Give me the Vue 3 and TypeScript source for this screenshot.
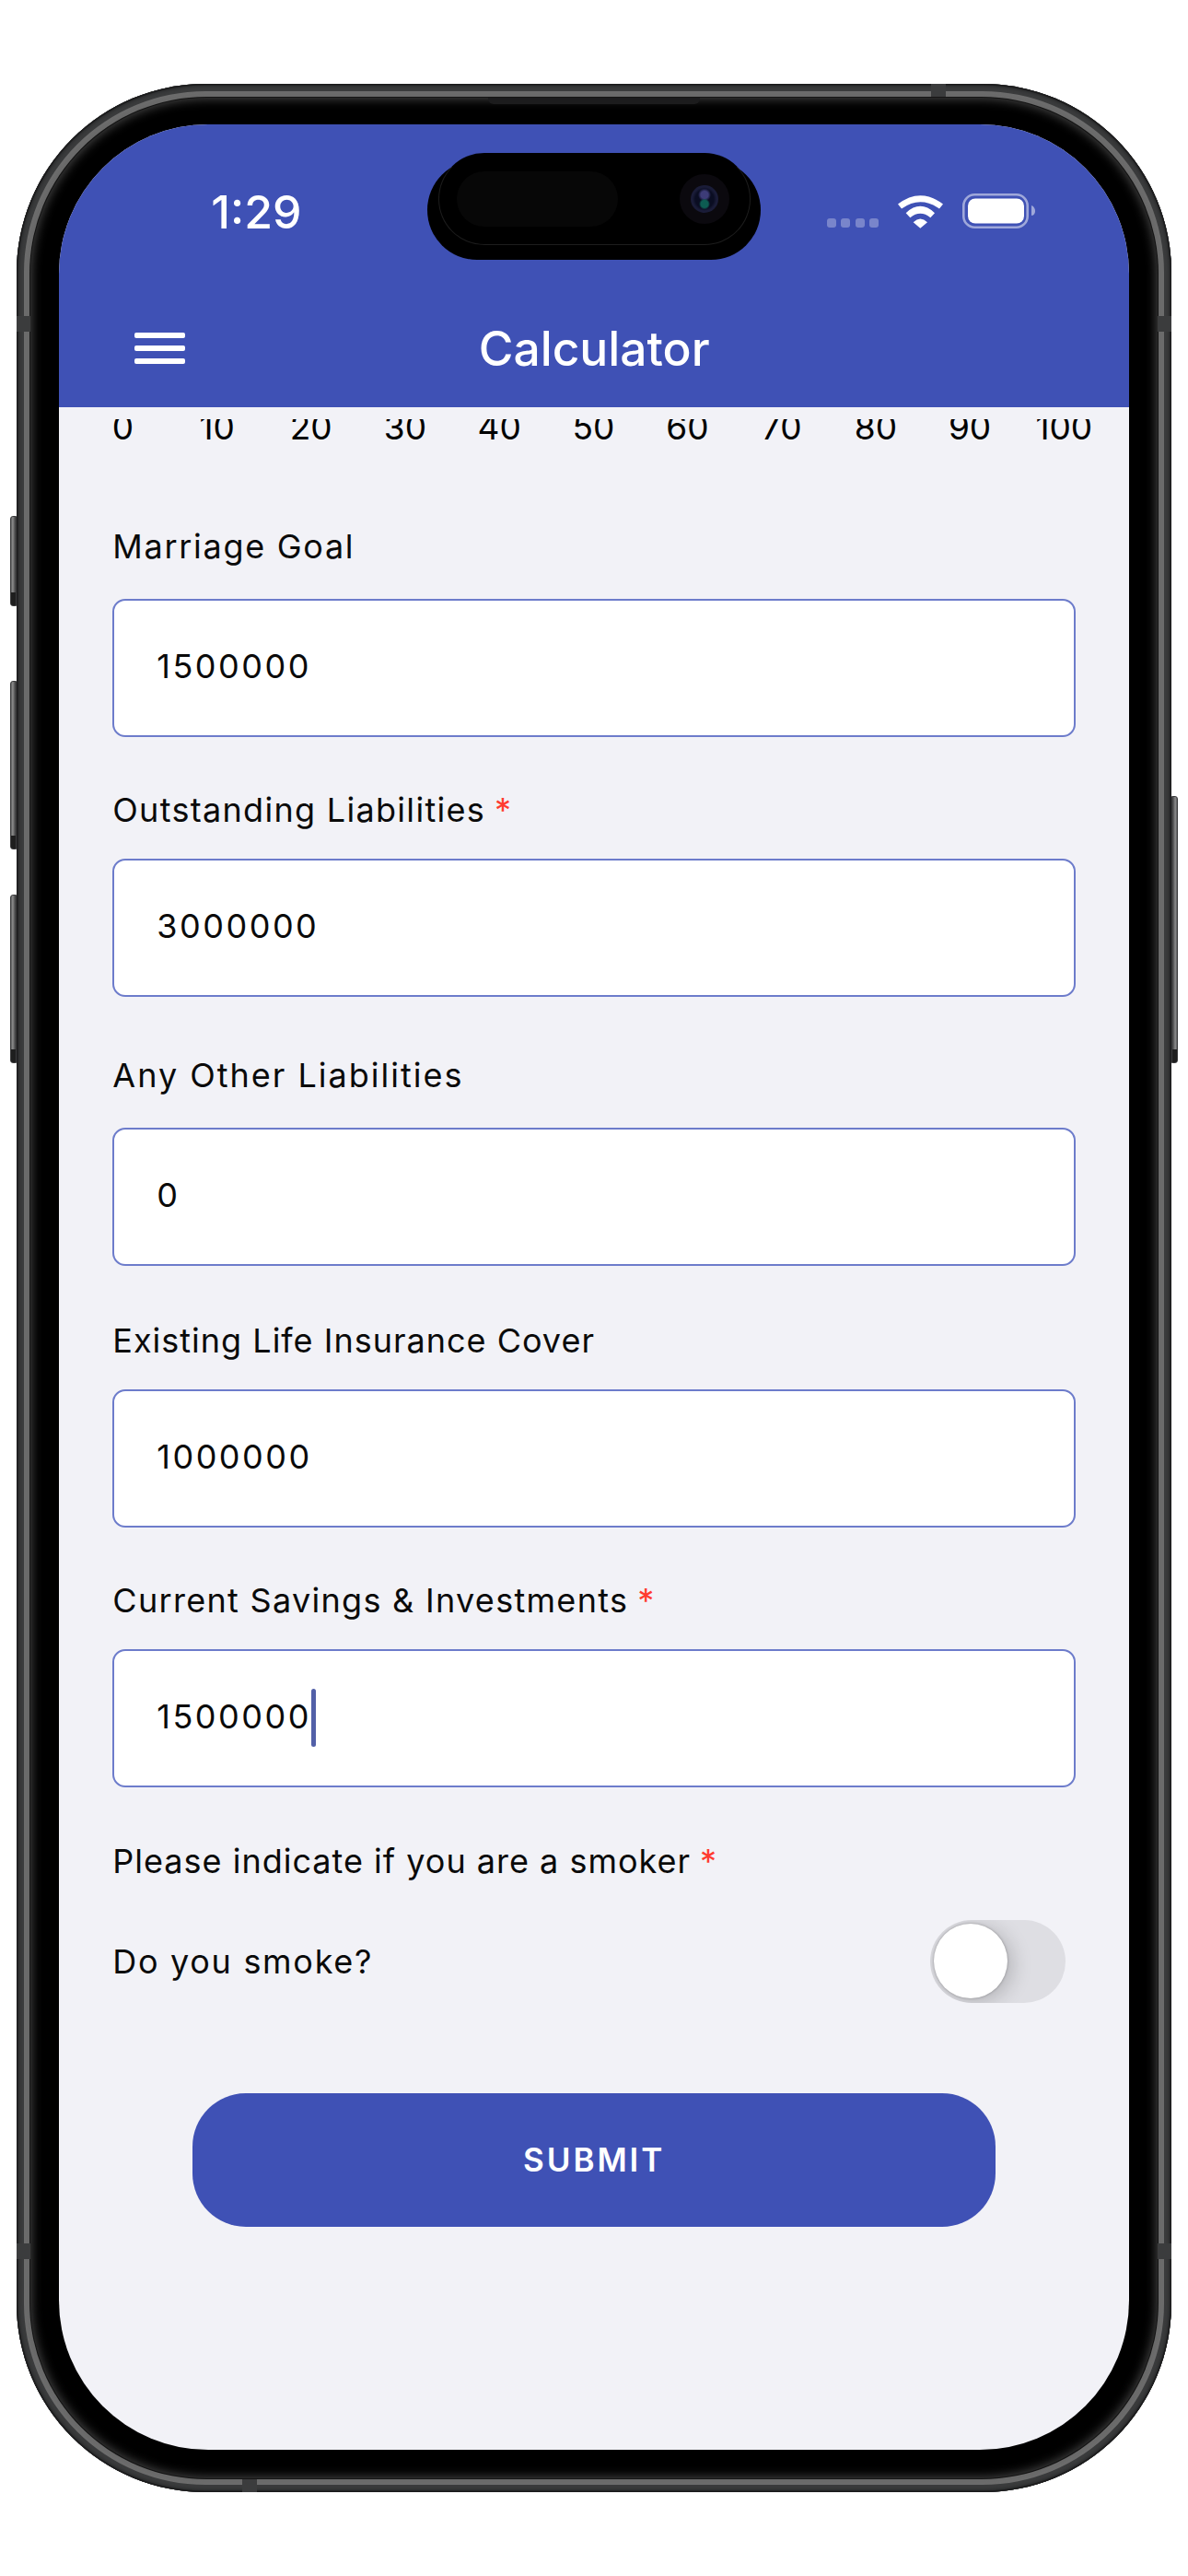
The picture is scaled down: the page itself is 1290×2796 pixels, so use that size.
<script setup lang="ts">
interface Field {
  label: string
  value: string
  required: boolean
  focused: boolean
  cls: string
}

const ticks: number[] = [0, 10, 20, 30, 40, 50, 60, 70, 80, 90, 100]

const fields: Field[] = [
  { label: 'Marriage Goal', value: '1500000', required: false, focused: false, cls: 'f1' },
  { label: 'Outstanding Liabilities', value: '3000000', required: true, focused: false, cls: 'f2' },
  { label: 'Any Other Liabilities', value: '0', required: false, focused: false, cls: 'f3' },
  { label: 'Existing Life Insurance Cover', value: '1000000', required: false, focused: false, cls: 'f4' },
  { label: 'Current Savings & Investments', value: '1500000', required: true, focused: true, cls: 'f5' }
]
</script>

<template>
  <div class="page">
    <div class="frame">
      <span class="btn btn-mute"></span>
      <span class="btn btn-up"></span>
      <span class="btn btn-down"></span>
      <span class="btn btn-power"></span>
      <span class="band band-top"></span>
      <span class="band band-bottom"></span>
      <span class="band band-left"></span>
      <span class="band band-left2"></span>
      <span class="band band-right"></span>
      <span class="band band-right2"></span>
      <span class="speaker"></span>
      <div class="bezel">
        <div class="screen">
          <div class="island">
            <div class="island-top">
              <span class="sensor"></span>
              <span class="camera"><span class="lens"></span></span>
            </div>
          </div>

          <header class="header">
            <div class="status">
              <span class="time">1:29</span>
              <div class="status-icons">
                <div class="dots"><i></i><i></i><i></i><i></i></div>
                <svg class="wifi" viewBox="0 0 147 107" width="49" height="36">
                  <path fill="#fff" d="M0 28Q73 -28 147 28L135 43Q73 -1 12 43Z" />
                  <path fill="#fff" d="M26 57Q73 13 120 57L106 72Q73 46 40 72Z" />
                  <path fill="#fff" d="M50 87Q73 65 96 87L73 107Z" />
                </svg>
                <svg class="battery" viewBox="0 0 79 38" width="79" height="38">
                  <rect x="1.3" y="1.3" width="69.4" height="35.4" rx="12" fill="none" stroke="#fff" stroke-opacity=".5" stroke-width="2.6" />
                  <rect x="6" y="5.5" width="61" height="27" rx="8" fill="#fff" />
                  <path d="M75 13C78 14 79 17 79 19C79 21 78 24 75 24Z" fill="#fff" fill-opacity=".5" />
                </svg>
              </div>
            </div>
            <div class="nav">
              <div class="burger"><i></i><i></i><i></i></div>
              <h1 class="title">Calculator</h1>
              <div></div>
            </div>
          </header>

          <main class="content">
            <div class="ticks-clip">
              <div class="ticks">
                <span v-for="t in ticks" :key="t" class="tick">{{ t }}</span>
              </div>
            </div>

            <form class="form" @submit.prevent>
              <div v-for="f in fields" :key="f.label" class="field" :class="f.cls">
                <div class="label">
                  {{ f.label }}<span v-if="f.required" class="req">*</span>
                </div>
                <div class="input">
                  <span class="value">{{ f.value }}</span>
                  <span v-if="f.focused" class="caret"></span>
                </div>
              </div>

              <div class="label smoker">Please indicate if you are a smoker<span class="req">*</span></div>
              <div class="smoke-row">
                <span class="label-inline">Do you smoke?</span>
                <span class="toggle"><span class="thumb"></span></span>
              </div>

              <div class="submit-row">
                <button type="button" class="submit">SUBMIT</button>
              </div>
            </form>
          </main>
        </div>
      </div>
    </div>
  </div>
</template>

<style>
html, body { margin: 0; background: #fff; }
</style>

<style scoped>
* { box-sizing: border-box; }
.page {
  width: 1290px;
  height: 2796px;
  padding: 91px 18px 0;
  background: #fff;
  overflow: hidden;
  font-family: Inter, "Liberation Sans", sans-serif;
}
.frame {
  position: relative;
  width: 1254px;
  height: 2614px;
  padding: 15px;
  border-radius: 205px;
  background: #303132;
  box-shadow:
    inset 0 0 0 1.5px #1c1c1d,
    inset 0 0 3px 3px #2b2c2d,
    inset 0 0 0 8px #3a3b3c,
    inset 0 0 2px 11px #6c6c6c,
    inset 0 0 0 15px #6a6a6a;
}
.bezel {
  height: 100%;
  padding: 29.3px 31px 31px 31.3px;
  border-radius: 191px;
  background: #000;
  border: 0;
  box-shadow: 0 0 0 1px #151515, inset 0 0 12px 1px #4a4a4a;
}
.screen {
  position: relative;
  display: flex;
  flex-direction: column;
  height: 100%;
  border-radius: 162px;
  overflow: hidden;
  background: #f2f2f7;
}
.btn {
  position: absolute;
  width: 7px;
  background:
    linear-gradient(180deg, transparent calc(100% - 14px), #1e1e1e calc(100% - 14px)),
    linear-gradient(90deg, #5a5b5c, #8c8c8c 35%, #3a3a3b);
  border: 1px solid #3c3c3d;
}
.btn-mute { left: -7px; top: 469px; height: 98px; border-radius: 3px 0 0 3px; }
.btn-up { left: -7px; top: 648px; height: 183px; border-radius: 3px 0 0 3px; }
.btn-down { left: -7px; top: 880px; height: 183px; border-radius: 3px 0 0 3px; }
.btn-power {
  right: -7px;
  top: 773px;
  height: 290px;
  border-radius: 0 3px 3px 0;
  background:
    linear-gradient(180deg, transparent calc(100% - 14px), #1e1e1e calc(100% - 14px)),
    linear-gradient(270deg, #5a5b5c, #8c8c8c 35%, #3a3a3b);
}
.band { position: absolute; background: #3b3c3d; }
.band-top { left: 993px; top: 0; width: 16px; height: 14px; }
.band-bottom { left: 245px; bottom: 0; width: 16px; height: 14px; }
.band-left { left: 0; top: 252px; width: 15px; height: 17px; }
.band-right { right: 0; top: 252px; width: 15px; height: 17px; }
.band-left2 { left: 0; top: 2344px; width: 15px; height: 17px; }
.band-right2 { right: 0; top: 2344px; width: 15px; height: 17px; }
.speaker {
  position: absolute;
  left: 512px;
  top: 15px;
  width: 230px;
  height: 7px;
  border-radius: 0 0 6px 6px;
  background: #1c1c1d;
}

.island {
  position: absolute;
  z-index: 2;
  left: 399.4px;
  top: 38.7px;
  width: 362px;
  height: 108px;
  border-radius: 54px;
  background: #000;
}
.island-top {
  position: absolute;
  left: 12px;
  top: -8px;
  width: 339px;
  height: 100px;
  border-radius: 50px;
  background: #000;
  border: 1px solid #1d1d1d;
  border-top-color: transparent;
  display: flex;
  align-items: center;
  justify-content: space-between;
  padding: 0 22px 0 19px;
}
.sensor {
  width: 175px;
  height: 60px;
  border-radius: 30px;
  background: #070707;
}
.camera {
  display: flex;
  align-items: center;
  justify-content: center;
  width: 54px;
  height: 54px;
  border-radius: 50%;
  background: #0b090e;
}
.lens {
  width: 30px;
  height: 30px;
  border-radius: 50%;
  background: radial-gradient(circle at 50% 68%, #0d5c52 0 4px, transparent 6px),
    radial-gradient(circle at 50% 35%, #3d3c78 0 4px, transparent 7px),
    radial-gradient(circle, #0a0d22 0 10px, #1a1c38 13px);
}

.header {
  flex: none;
  height: 306.7px;
  background: #3f51b5;
  color: #fff;
  display: flex;
  flex-direction: column;
}
.status {
  height: 178.7px;
  padding: 71px 102px 0 165px;
  display: flex;
  justify-content: space-between;
  align-items: flex-start;
}
.time {
  font-size: 50px;
  line-height: 48px;
  font-weight: 500;
}
.status-icons {
  display: flex;
  align-items: flex-end;
  height: 42px;
  gap: 21px;
}
.dots {
  display: flex;
  gap: 5.5px;
  margin-bottom: 1px;
}
.dots i {
  width: 10px;
  height: 10px;
  border-radius: 3px;
  background: rgba(255, 255, 255, 0.3);
}
.wifi { display: block; }
.battery { display: block; }
.nav {
  flex: 1;
  display: grid;
  grid-template-columns: 1fr auto 1fr;
  align-items: center;
  padding: 0 82px;
}
.burger {
  width: 55px;
  display: flex;
  flex-direction: column;
  gap: 8.5px;
}
.burger i {
  height: 5.5px;
  border-radius: 2px;
  background: #fff;
}
.title {
  margin: 1px 0 0;
  font-size: 51.5px;
  line-height: 60px;
  font-weight: 500;
}

.content {
  flex: 1;
  display: flex;
  flex-direction: column;
}
.ticks-clip {
  margin-top: 13px;
  height: 23px;
  overflow: hidden;
  flex: none;
}
.ticks {
  display: grid;
  grid-template-columns: repeat(11, 102.2px);
  padding-left: 18px;
  margin-top: -9px;
}
.tick {
  text-align: center;
  font-size: 37px;
  line-height: 36px;
  color: #000;
}
.form {
  padding: 90px 58px 0;
  display: flex;
  flex-direction: column;
}
.field { display: flex; flex-direction: column; }
.f2 { margin-top: 54px; }
.f3 { margin-top: 60px; }
.f4 { margin-top: 56px; }
.f5 { margin-top: 54px; }
.label, .label-inline {
  font-size: 36px;
  line-height: 50px;
  color: #0a0a0a;
}
.label {
  margin-bottom: 32px;
  white-space: nowrap;
}
.f2 .label, .f4 .label, .f5 .label { margin-bottom: 28px; }
.f1 .label { letter-spacing: 1.7px; }
.f2 .label { letter-spacing: 1.3px; }
.f3 .label { letter-spacing: 2px; }
.f4 .label { letter-spacing: 1px; }
.f5 .label { letter-spacing: 1.3px; }
.req {
  color: #ff3b30;
  margin-left: 10px;
  font-size: 36px;
  letter-spacing: 0;
}
.input {
  height: 150px;
  border: 2px solid #6d7ccb;
  border-radius: 14px;
  background: #fff;
  padding-left: 46px;
  display: flex;
  align-items: center;
}
.value {
  font-size: 36px;
  letter-spacing: 2.5px;
  color: #0a0a0a;
  margin-bottom: 4px;
}
.caret {
  width: 5px;
  height: 63px;
  border-radius: 3px;
  background: #5260a8;
}
.smoker {
  margin-top: 54.7px;
  margin-bottom: 39px;
  letter-spacing: 1px;
}
.smoke-row {
  height: 90px;
  display: flex;
  align-items: center;
  justify-content: space-between;
  padding: 0 11.4px 0 0;
}
.label-inline { letter-spacing: 1.7px; }
.toggle {
  position: relative;
  width: 147px;
  height: 90px;
  border-radius: 45px;
  background: #dedee3;
  display: flex;
  align-items: center;
  padding-left: 4px;
  overflow: hidden;
}
.thumb {
  width: 80px;
  height: 81px;
  border-radius: 50%;
  background: #fff;
  box-shadow: 5px 4px 22px rgba(0, 0, 0, 0.2), 0 0 3px rgba(0, 0, 0, 0.3);
}
.submit-row {
  display: flex;
  justify-content: center;
  margin-top: 98px;
}
.submit {
  width: 872px;
  height: 145px;
  border: 0;
  border-radius: 58px;
  background: #3f51b5;
  color: #fff;
  font-family: inherit;
  font-size: 35px;
  font-weight: 600;
  letter-spacing: 2.9px;
}
</style>
